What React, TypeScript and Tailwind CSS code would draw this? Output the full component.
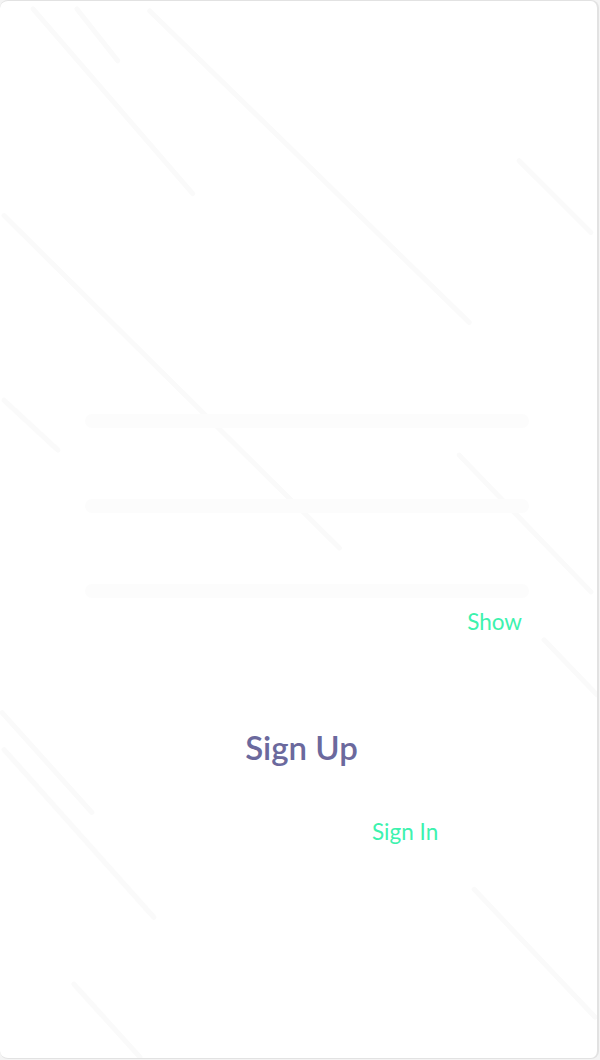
const streaks = [
  [33, 8, 193, 193],
  [77, 8, 118, 60],
  [150, 10, 470, 322],
  [520, 160, 592, 232],
  [4, 215, 340, 548],
  [4, 400, 58, 450],
  [460, 455, 592, 592],
  [545, 640, 598, 695],
  [2, 713, 92, 813],
  [4, 750, 154, 918],
  [475, 890, 596, 1018],
  [74, 985, 140, 1058],
]

function Streaks() {
  return (
    <svg className="absolute inset-0 h-full w-full" viewBox="0 0 598 1059" aria-hidden="true">
      {streaks.map(([x1, y1, x2, y2], i) => (
        <line
          key={i}
          x1={x1}
          y1={y1}
          x2={x2}
          y2={y2}
          stroke="#fafafa"
          strokeWidth={5}
          strokeLinecap="round"
        />
      ))}
    </svg>
  )
}

function Field() {
  return <div className="h-[14px] w-full rounded-full bg-[#fcfcfc]" />
}

export default function App() {
  return (
    <div className="h-[1060px] w-[600px] bg-[#f4f4f4] font-['Lato','Liberation_Sans',sans-serif]">
      <div className="relative h-[1059px] w-[599px] overflow-hidden rounded-lg border-t border-r-2 border-b border-[#e2e2e2] bg-white">
        <Streaks />

        <div className="relative flex flex-col">
          <form className="flex flex-col gap-[71px] pt-[413px] pl-[85px] pr-[68px]">
            <Field />
            <Field />
            <Field />
          </form>

          <div className="mt-[10px] flex justify-end pr-[75px]">
            <button type="button" className="text-[22.5px] leading-[1.2] text-[#3df2ae]">Show</button>
          </div>

          <div className="mt-[93px] flex justify-center pl-[6px]">
            <button type="button" className="text-[33px] font-semibold leading-[1.2] text-[#6b699d]">Sign Up</button>
          </div>

          <div className="mt-[50px] pl-[372px]">
            <a href="#" className="text-[22.5px] leading-[1.2] text-[#3df2ae]">Sign In</a>
          </div>
        </div>
      </div>
    </div>
  )
}
